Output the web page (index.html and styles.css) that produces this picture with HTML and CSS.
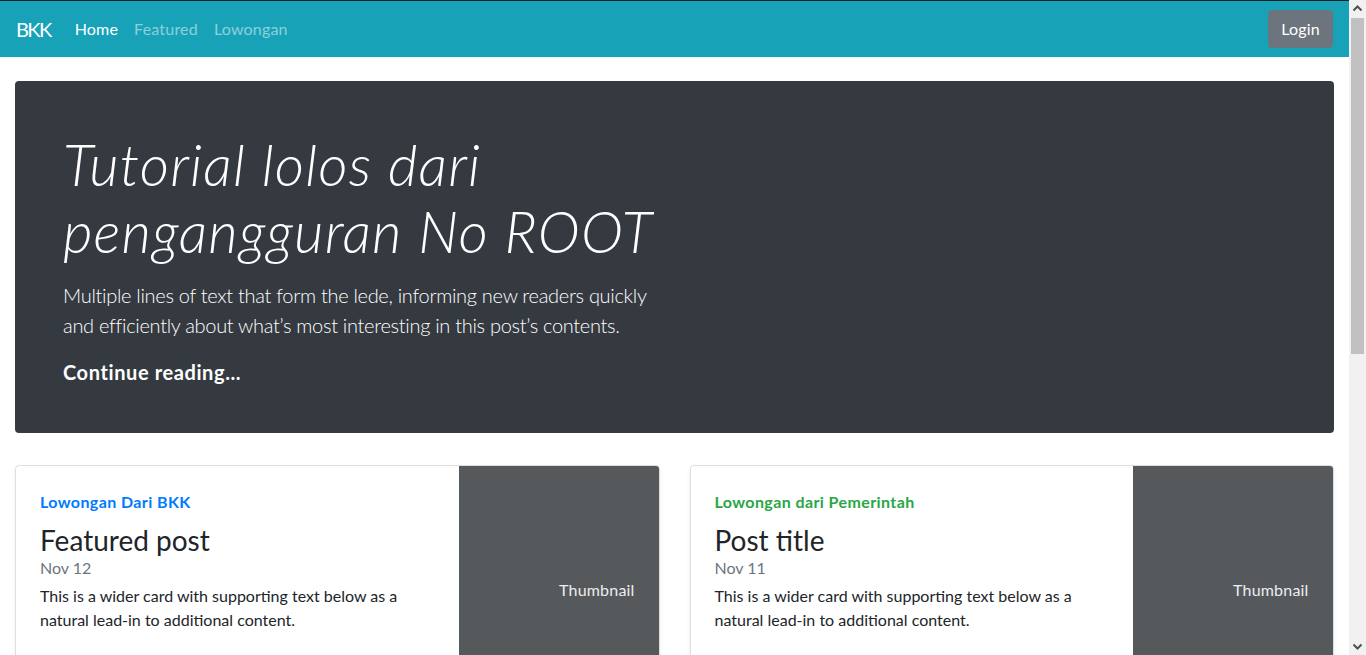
FILE: index.html
```html
<!DOCTYPE html>
<html lang="id">
<head>
<meta charset="utf-8">
<title>BKK</title>
<link rel="stylesheet" href="styles.css">
</head>
<body>
<div class="page">
  <nav class="navbar">
    <a class="brand" href="#">BKK</a>
    <ul class="nav">
      <li><a class="nav-link active" href="#">Home</a></li>
      <li><a class="nav-link" href="#">Featured</a></li>
      <li><a class="nav-link" href="#">Lowongan</a></li>
    </ul>
    <button class="btn-login" type="button">Login</button>
  </nav>
  <main class="container">
    <section class="jumbotron">
      <div class="jumbo-col">
        <h1 class="display">Tutorial lolos dari pengangguran No ROOT</h1>
        <p class="lead lede">Multiple lines of text that form the lede, informing new readers quickly and efficiently about what’s most interesting in this post’s contents.</p>
        <p class="lead"><a class="continue" href="#">Continue reading...</a></p>
      </div>
    </section>
    <div class="cards">
      <article class="card">
        <div class="card-body">
          <strong class="category primary">Lowongan Dari BKK</strong>
          <h3 class="card-title">Featured post</h3>
          <div class="date">Nov 12</div>
          <p class="card-text">This is a wider card with supporting text below as a natural lead-in to additional content.</p>
          <a class="stretched" href="#">Continue reading</a>
        </div>
        <svg class="thumb" width="200" height="250" viewBox="0 0 200 250"><rect width="100%" height="100%" fill="#55595c"/><text x="50%" y="50%" fill="#eceeef" dy=".3em">Thumbnail</text></svg>
      </article>
      <article class="card">
        <div class="card-body">
          <strong class="category success">Lowongan dari Pemerintah</strong>
          <h3 class="card-title">Post title</h3>
          <div class="date">Nov 11</div>
          <p class="card-text">This is a wider card with supporting text below as a natural lead-in to additional content.</p>
          <a class="stretched" href="#">Continue reading</a>
        </div>
        <svg class="thumb" width="200" height="250" viewBox="0 0 200 250"><rect width="100%" height="100%" fill="#55595c"/><text x="50%" y="50%" fill="#eceeef" dy=".3em">Thumbnail</text></svg>
      </article>
    </div>
    <section class="more">
      <h3 class="more-title">From the Firehose</h3>
      <p>Lowongan terbaru dari BKK dan instansi pemerintah akan ditampilkan di sini.</p>
      <p>This blog post shows a few different types of content that are supported and styled with Bootstrap.</p>
      <p>Cum sociis natoque penatibus et magnis dis parturient montes, nascetur ridiculus mus.</p>
    </section>
  </main>
  <footer class="footer">
    <p>BKK &copy; 2019</p>
    <p><a href="#">Back to top</a></p>
  </footer>
</div>
<div class="scrollbar" aria-hidden="true">
  <div class="sb-btn"><svg width="17" height="17" viewBox="0 0 17 17"><path d="M4.5 10.5 L8.5 6.5 L12.5 10.5" fill="none" stroke="#505050" stroke-width="2"/></svg></div>
  <div class="sb-track"><div class="sb-thumb"></div></div>
  <div class="sb-btn"><svg width="17" height="17" viewBox="0 0 17 17"><path d="M4.5 6.5 L8.5 10.5 L12.5 6.5" fill="none" stroke="#505050" stroke-width="2"/></svg></div>
</div>
</body>
</html>
```
FILE: styles.css
```css
* { box-sizing: border-box; }
html, body { height: 100%; }
body {
  margin: 0;
  display: flex;
  overflow: hidden;
  font-family: "Lato", "Noto Sans", sans-serif;
  font-size: 16px;
  line-height: 1.5;
  color: #212529;
  background: #fff;
}
a { text-decoration: none; }

.page {
  flex: 1;
  min-width: 0;
  border-top: 1px solid #0b1f22;
}

/* scrollbar lookalike */
.scrollbar {
  flex: none;
  width: 17px;
  height: 100vh;
  display: flex;
  flex-direction: column;
  background: #f1f1f1;
}
.sb-btn { height: 17px; flex: none; }
.sb-btn svg { display: block; }
.sb-track { flex: 1; padding: 1px 2px 0; }
.sb-thumb { height: 336px; background: #c1c1c1; }

.navbar {
  display: flex;
  align-items: center;
  height: 56px;
  padding: 8px 16px;
  background: #17a2b8;
}
.brand {
  font-size: 20px;
  line-height: 30px;
  padding: 5px 0;
  margin-right: 16px;
  color: #fff;
  letter-spacing: -1.6px;
}
.nav {
  display: flex;
  list-style: none;
  margin: 0;
  padding: 0;
  flex: 1;
}
.nav-link {
  display: block;
  padding: 8px;
  color: rgba(255,255,255,.5);
  letter-spacing: .2px;
}
.nav-link.active { color: #fff; }
.btn-login {
  font-family: inherit;
  font-size: 16px;
  line-height: 24px;
  padding: 6px 12px;
  color: #fff;
  background: #6c757d;
  border: 1px solid #6c757d;
  border-radius: 4px;
  letter-spacing: .2px;
}

.container {
  padding: 24px 15px 0;
}
.jumbotron {
  background: #343a40;
  color: #fff;
  border-radius: 4px;
  padding: 48px 48px 46px;
  margin-bottom: 32px;
}
.jumbo-col { width: 50%; }
.display {
  margin: 0;
  padding-top: 2px;
  font-size: 57px;
  font-weight: 300;
  font-style: italic;
  line-height: 67px;
  letter-spacing: 1.2px;
}
.lead {
  font-size: 20px;
  font-weight: 300;
  line-height: 30px;
  margin: 0;
}
.lede { margin: 15px 0 17px; letter-spacing: -.3px; }
.continue { color: #fff; font-weight: 700; letter-spacing: .6px; }

.cards {
  display: grid;
  grid-template-columns: 1fr 1fr;
  column-gap: 30px;
}
.card {
  display: flex;
  height: 250px;
  border: 1px solid rgba(0,0,0,.125);
  border-radius: 4px;
  overflow: hidden;
  box-shadow: 0 2px 4px rgba(0,0,0,.075);
  margin-bottom: 24px;
}
.card-body {
  flex: 1;
  display: flex;
  flex-direction: column;
  align-items: flex-start;
  padding: 24px;
}
.category { margin-bottom: 8px; letter-spacing: .4px; }
.primary { color: #007bff; }
.success { color: #28a745; }
.card-title {
  margin: 0;
  padding-top: 2px;
  font-size: 28px;
  font-weight: 400;
  line-height: 32px;
}
.date { color: #6c757d; margin-bottom: 4px; }
.card-text { margin: 0 0 auto; }
.stretched { color: #007bff; }
.thumb { flex: none; display: block; }
.thumb text { font-family: "Lato", sans-serif; font-size: 16px; letter-spacing: .2px; }

.more { padding: 24px 0 200px; }
.more-title { font-size: 24px; font-weight: 400; margin: 0 0 16px; padding-bottom: 16px; border-bottom: 1px solid #dee2e6; }
.footer {
  padding: 40px 0;
  text-align: center;
  color: #999;
  background: #f9f9f9;
  border-top: 1px solid #e5e5e5;
}
.footer a { color: #007bff; }
```
